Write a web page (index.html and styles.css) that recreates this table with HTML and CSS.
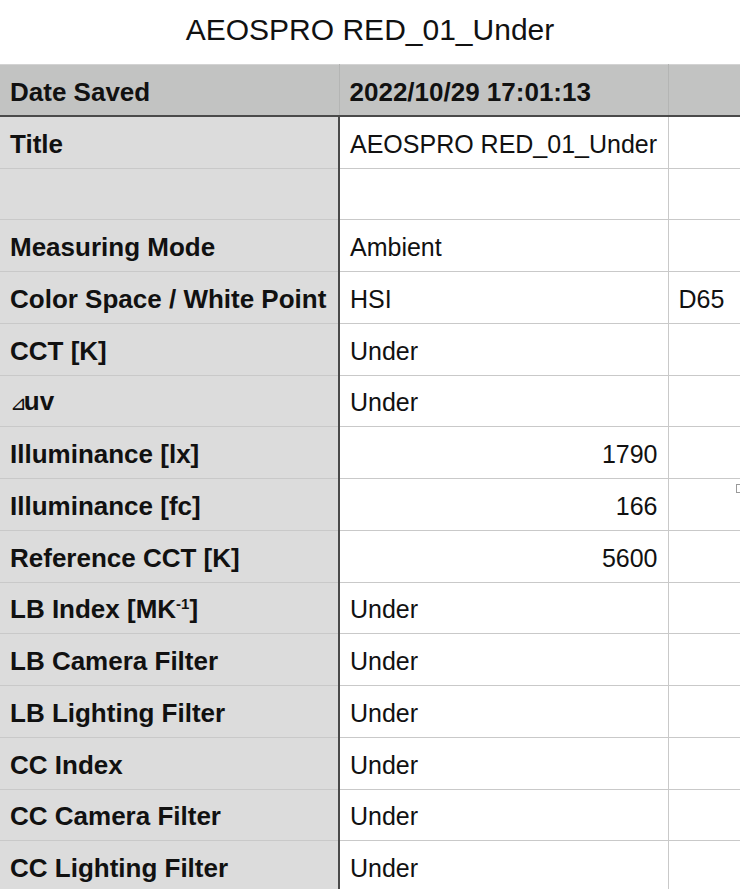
FILE: index.html
```html
<!DOCTYPE html>
<html>
<head>
<meta charset="utf-8">
<link rel="stylesheet" href="styles.css">
</head>
<body>
<h1 class="title">AEOSPRO RED_01_Under</h1>
<div class="sheet">
<table class="grid">
<colgroup><col class="c1"><col class="c2"><col class="c3"></colgroup>
<thead>
<tr class="head"><th>Date Saved</th><th>2022/10/29 17:01:13</th><th></th></tr>
</thead>
<tbody>
<tr><th>Title</th><td>AEOSPRO RED_01_Under</td><td></td></tr>
<tr><th></th><td></td><td></td></tr>
<tr><th>Measuring Mode</th><td>Ambient</td><td></td></tr>
<tr><th>Color Space / White Point</th><td>HSI</td><td>D65</td></tr>
<tr><th>CCT [K]</th><td>Under</td><td></td></tr>
<tr><th><span class="delta">⊿</span>uv</th><td>Under</td><td></td></tr>
<tr><th>Illuminance [lx]</th><td class="num">1790</td><td></td></tr>
<tr><th>Illuminance [fc]</th><td class="num">166</td><td class="handle-cell"><span class="handle"></span></td></tr>
<tr><th>Reference CCT [K]</th><td class="num">5600</td><td></td></tr>
<tr><th>LB Index [MK<sup class="sup">-1</sup>]</th><td>Under</td><td></td></tr>
<tr><th>LB Camera Filter</th><td>Under</td><td></td></tr>
<tr><th>LB Lighting Filter</th><td>Under</td><td></td></tr>
<tr><th>CC Index</th><td>Under</td><td></td></tr>
<tr><th>CC Camera Filter</th><td>Under</td><td></td></tr>
<tr><th>CC Lighting Filter</th><td>Under</td><td></td></tr>
</tbody>
</table>
</div>
</body>
</html>
```
FILE: styles.css
```css
html, body {
  margin: 0;
  padding: 0;
  background: #ffffff;
  overflow: hidden;
}
body {
  font-family: "Liberation Sans", Arial, sans-serif;
  color: #111;
}
.title {
  margin: 0;
  padding-top: 12px;
  height: 52px;
  box-sizing: border-box;
  text-align: center;
  font-size: 30px;
  font-weight: normal;
  line-height: 36px;
  color: #111;
}
.sheet {
  width: 760px;
  margin-top: 12px;
}
.grid {
  border-collapse: collapse;
  table-layout: fixed;
  width: 760px;
  font-size: 25px;
}
.c1 { width: 339px; }
.c2 { width: 329px; }
.c3 { width: 92px; }
.grid tr { height: 51.75px; }
.grid th, .grid td {
  border: 1px solid #c9c9c9;
  padding: 3px 10px 0 10px;
  text-align: left;
  white-space: nowrap;
  overflow: hidden;
  line-height: 28px;
}
.grid td { background: #fff; }
.grid tbody th {
  background: #dcdcdc;
  font-weight: bold;
  font-size: 26px;
  border-right: 2px solid #4a4a4a;
}
.grid thead th {
  background: #c2c3c2;
  font-weight: bold;
  font-size: 26px;
  border-color: #b4b5b4;
  border-top-color: #d3d3d3;
  border-bottom: 2px solid #4a4a4a;
}
.grid thead th:first-child { border-left: none; }
.grid tbody th { border-left: none; }
.grid td.num { text-align: right; padding-right: 10px; }
.delta {
  font-family: "DejaVu Sans", sans-serif;
  font-weight: normal;
  font-size: 20px;
  letter-spacing: -3px;
}
.sup {
  font-size: 15px;
  vertical-align: 9px;
  line-height: 0;
}
.handle-cell { position: relative; }
.handle {
  position: absolute;
  left: 67px;
  top: 5px;
  width: 4px;
  height: 7px;
  border: 1px solid #9a9a9a;
  border-right: none;
}
```
